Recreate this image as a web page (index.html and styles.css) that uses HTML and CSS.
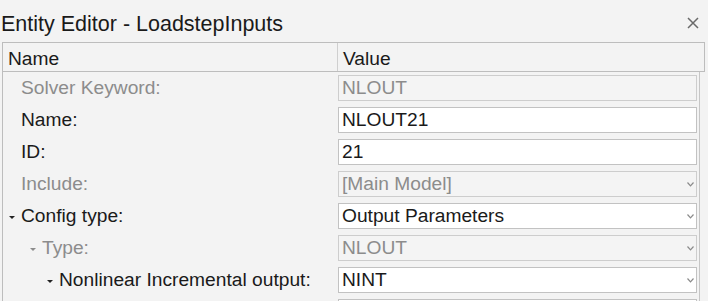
FILE: index.html
```html
<!DOCTYPE html>
<html lang="en-us">
<head>
    <meta charset="utf-8"/>
    <meta name="viewport" content="width=device-width, initial-scale=1"/>
    <link rel="stylesheet" href="styles.css">
</head>
<body>

    <div class="editor">
        <div class="titlebar">
            <span class="title">Entity Editor - LoadstepInputs</span>
            <svg class="close" width="12" height="12" viewBox="0 0 12 12">
                <path d="M1 1L11 11M11 1L1 11"/>
            </svg>
        </div>

        <div class="tree">
            <div class="head">
                <div class="head-cell col-name">Name</div>
                <div class="head-cell col-value">Value</div>
            </div>

            <div class="rows">
                <div class="row">
                    <div class="label muted">Solver Keyword:</div>
                    <div class="field disabled">NLOUT</div>
                </div>
                <div class="row">
                    <div class="label">Name:</div>
                    <div class="field">NLOUT21</div>
                </div>
                <div class="row">
                    <div class="label">ID:</div>
                    <div class="field">21</div>
                </div>
                <div class="row">
                    <div class="label muted">Include:</div>
                    <div class="field disabled combo">
                        [Main Model]
                        <svg class="chevron" width="7" height="5" viewBox="0 0 7 5"><path d="M0.5 0.5L3.5 3.8L6.5 0.5"/></svg>
                    </div>
                </div>
                <div class="row">
                    <div class="label lvl0"><span class="twisty"></span>Config type:</div>
                    <div class="field combo">
                        Output Parameters
                        <svg class="chevron" width="7" height="5" viewBox="0 0 7 5"><path d="M0.5 0.5L3.5 3.8L6.5 0.5"/></svg>
                    </div>
                </div>
                <div class="row">
                    <div class="label muted lvl1"><span class="twisty"></span>Type:</div>
                    <div class="field disabled combo">
                        NLOUT
                        <svg class="chevron" width="7" height="5" viewBox="0 0 7 5"><path d="M0.5 0.5L3.5 3.8L6.5 0.5"/></svg>
                    </div>
                </div>
                <div class="row">
                    <div class="label lvl2"><span class="twisty"></span>Nonlinear Incremental output:</div>
                    <div class="field combo">
                        NINT
                        <svg class="chevron" width="7" height="5" viewBox="0 0 7 5"><path d="M0.5 0.5L3.5 3.8L6.5 0.5"/></svg>
                    </div>
                </div>
                <div class="row">
                    <div class="label"></div>
                    <div class="field"></div>
                </div>
            </div>
        </div>
    </div>

</body>
</html>
```

FILE: styles.css
```css
/* editor de entidades - estilo janela do windows */

html, body {
    margin: 0;
    height: 100%;
    overflow: hidden;
}

* {
    box-sizing: border-box;
}

body {
    background-color: #f3f3f3;
    font-family: "Liberation Sans", Arial, sans-serif;
    font-size: 19.2px;
    color: #1a1a1a;
}

.titlebar {
    height: 42px;
    display: flex;
    align-items: center;
    justify-content: space-between;
    padding: 0 9px 0 1px;
}

.title {
    font-size: 21.5px;
    margin-top: 6px;
}

.close {
    stroke: #6a6a6a;
    stroke-width: 1.5;
    fill: none;
    margin-top: 4px;
}

.tree {
    margin-left: 2px;
    width: 703px;
}

.head {
    display: flex;
    height: 30px;
    border: 1px solid #bdbdbd;
}

.head-cell {
    display: flex;
    align-items: center;
    padding-top: 3px;
}

.col-name {
    width: 335px;
    flex-shrink: 0;
    padding-left: 5px;
    border-right: 1px solid #cfcfcf;
}

.col-value {
    padding-left: 5px;
}

.rows {
    width: 698px;
    border-left: 1px solid #bdbdbd;
    border-right: 1px solid #c6c6c6;
}

.row {
    display: flex;
    height: 32px;
    align-items: center;
}

.label {
    width: 335px;
    flex-shrink: 0;
    padding-left: 18px;
    display: flex;
    align-items: center;
    white-space: nowrap;
}

.label.lvl0 {
    padding-left: 6px;
}

.label.lvl1 {
    padding-left: 27px;
}

.label.lvl2 {
    padding-left: 44px;
}

.twisty {
    width: 0;
    height: 0;
    border-left: 3px solid transparent;
    border-right: 3px solid transparent;
    border-top: 3.5px solid #222;
    margin-right: 6px;
    margin-top: 3px;
}

.muted {
    color: #8c8c8c;
}

.muted .twisty {
    border-top-color: #8c8c8c;
}

.field {
    width: 359px;
    flex-shrink: 0;
    height: 26px;
    border: 1px solid #c2c2c2;
    background-color: #fff;
    padding-left: 3px;
    display: flex;
    align-items: center;
    justify-content: space-between;
    white-space: nowrap;
}

.field.disabled {
    background-color: #f4f4f4;
    border-color: #cdcdcd;
    color: #8c8c8c;
}

.chevron {
    stroke: #8a8a8a;
    stroke-width: 1.2;
    fill: none;
    margin-right: 2px;
}
```
